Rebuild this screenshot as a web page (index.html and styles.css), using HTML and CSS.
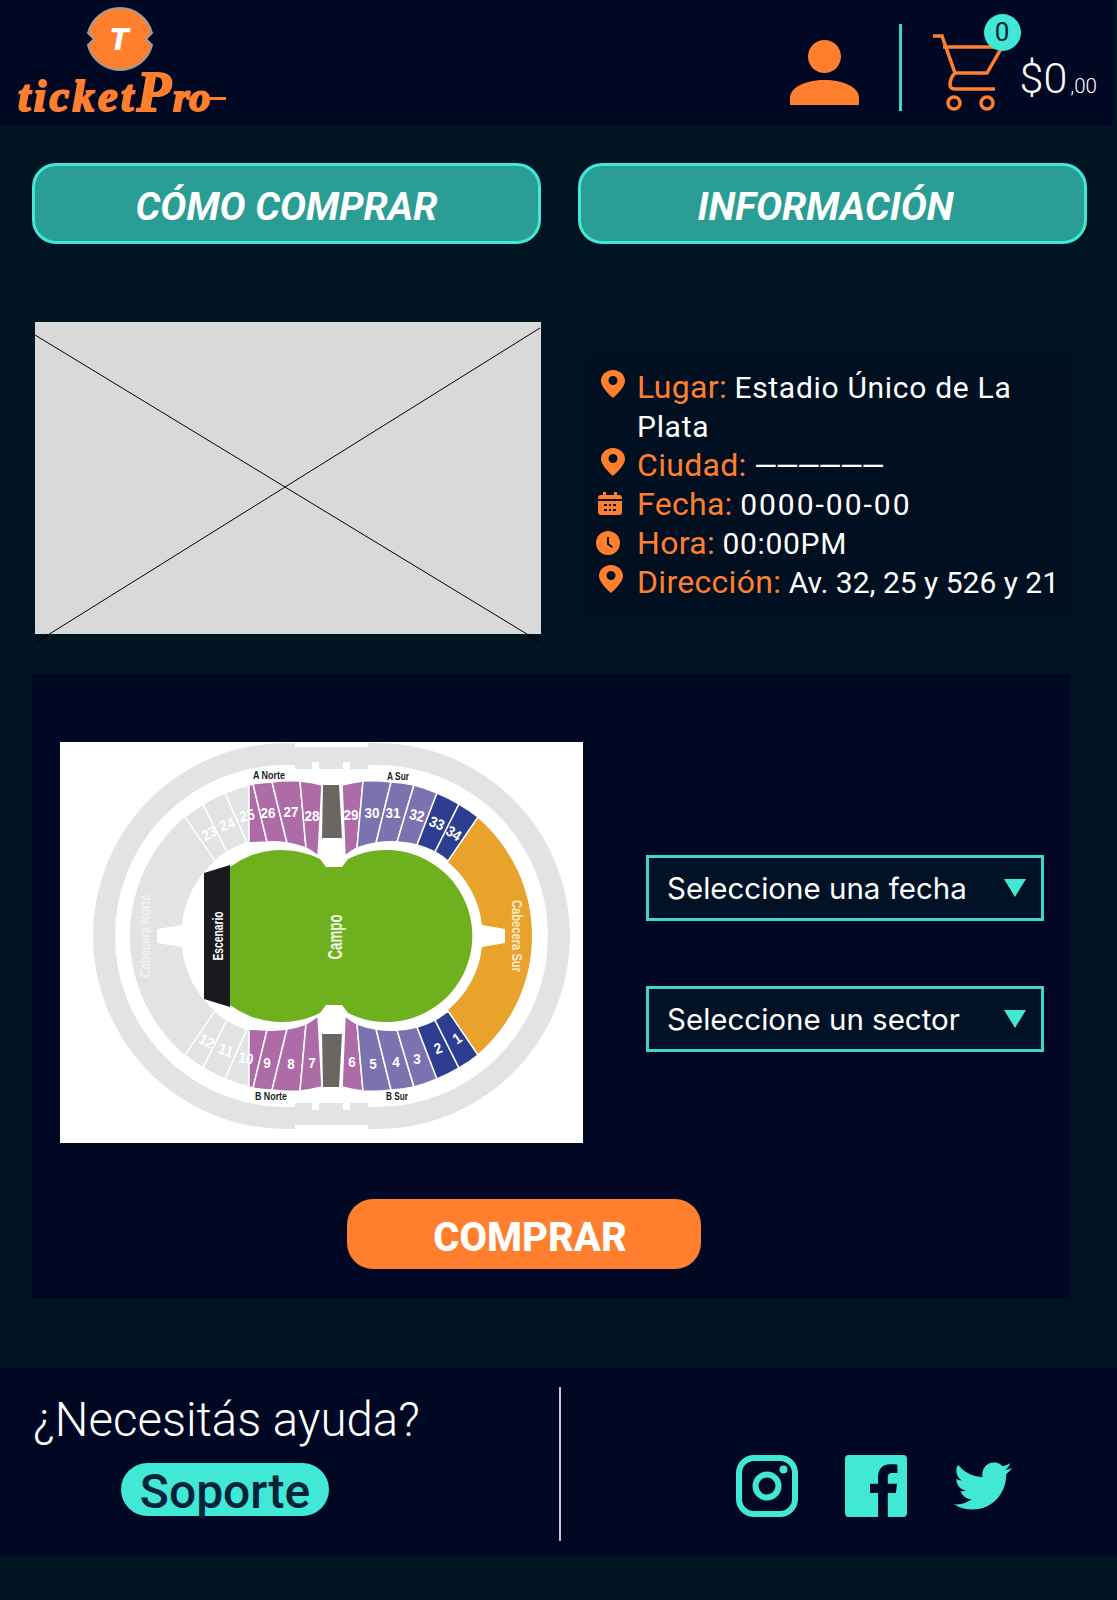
FILE: index.html
```html
<!DOCTYPE html>
<html lang="es">
<head>
    <meta charset="UTF-8">
    <meta name="viewport" content="width=device-width, initial-scale=1.0">
    <title>ticketPro</title>
    <link rel="stylesheet" href="styles.css">
</head>
<body>

    <header class="topbar">
        <div class="logo">
            <svg class="logo-badge" viewBox="85 5 70 72" width="70" height="72">
                <path class="logo-coin" d="M152 35A33 33 0 0 0 88 35L94 41L88 47A33 33 0 0 0 152 47L146 41Z"/>
                <text class="logo-t" x="119" y="52">T</text>
            </svg>
            <div class="logo-word">ticket<span class="logo-cap">P</span><span class="logo-end">ro</span></div>
        </div>

        <div class="topbar-right">
            <svg class="user-icon" viewBox="0 0 69 65" width="69" height="65">
                <circle cx="34.5" cy="16.5" r="16.5"/>
                <path d="M0 65V58C0 47 16 40 34.5 40S69 47 69 58V65Z"/>
            </svg>
            <div class="topbar-sep"></div>
            <div class="cart">
                <svg class="cart-icon" viewBox="930 30 76 85" width="76" height="85">
                    <path d="M933 36H942L955 73H987L1002 47H943"/>
                    <path d="M955 73C952 76 950 80 950 85C950 88 952 89 956 89H995"/>
                    <circle cx="954" cy="103" r="6"/>
                    <circle cx="987" cy="103" r="6"/>
                </svg>
                <span class="cart-count">0</span>
            </div>
            <div class="price">$0<small>,00</small></div>
        </div>
    </header>

    <nav class="main-buttons">
        <a class="big-button" href="#">CÓMO COMPRAR</a>
        <a class="big-button big-button-info" href="#">INFORMACIÓN</a>
    </nav>

    <section class="event">
        <div class="placeholder">
            <svg viewBox="35 322 506 312" width="506" height="312">
                <line x1="35" y1="335" x2="540" y2="642"/>
                <line x1="540" y1="328" x2="35" y2="643"/>
            </svg>
        </div>

        <ul class="event-info">
            <li>
                <svg viewBox="0 0 24 28"><path fill-rule="evenodd" d="M12 0C5 0 0 5 0 11C0 18 12 28 12 28S24 18 24 11C24 5 19 0 12 0ZM12 15A4.5 4.5 0 1 1 12 6A4.5 4.5 0 0 1 12 15Z"/></svg>
                <p><b>Lugar:</b> <span class="spread">Estadio Único de La</span> <span class="spread">Plata</span></p>
            </li>
            <li>
                <svg viewBox="0 0 24 28"><path fill-rule="evenodd" d="M12 0C5 0 0 5 0 11C0 18 12 28 12 28S24 18 24 11C24 5 19 0 12 0ZM12 15A4.5 4.5 0 1 1 12 6A4.5 4.5 0 0 1 12 15Z"/></svg>
                <p><b>Ciudad:</b> <span class="dashes">——————</span></p>
            </li>
            <li>
                <svg viewBox="0 0 24 24"><path fill-rule="evenodd" d="M5 1H8V4H16V1H19V4H21C23 4 24 5 24 7V8H0V7C0 5 1 4 3 4H5ZM0 10H24V21C24 23 23 24 21 24H3C1 24 0 23 0 21ZM6 13V15H9V13ZM11 13V15H13V13ZM15 13V15H18V13ZM6 18V20H9V18ZM11 18V20H13V18ZM15 18V20H18V18Z"/></svg>
                <p><b>Fecha:</b> <span class="spread-more">0000-00-00</span></p>
            </li>
            <li>
                <svg viewBox="0 0 24 24"><path fill-rule="evenodd" d="M12 0A12 12 0 1 1 12 24A12 12 0 1 1 12 0ZM11 6V13.5L16 17L17 15.500L13 12.500V6Z"/></svg>
                <p><b>Hora:</b> <span class="spread">00:00PM</span></p>
            </li>
            <li>
                <svg viewBox="0 0 24 28"><path fill-rule="evenodd" d="M12 0C5 0 0 5 0 11C0 18 12 28 12 28S24 18 24 11C24 5 19 0 12 0ZM12 15A4.5 4.5 0 1 1 12 6A4.5 4.5 0 0 1 12 15Z"/></svg>
                <p><b>Dirección:</b> Av. 32, 25 y 526 y 21</p>
            </li>
        </ul>
    </section>

    <section class="buy">
        <div class="buy-row">
            <!-- stadium map, drawn in page coordinates -->
            <svg class="map" viewBox="60 742 523 401" width="523" height="401">
                <rect class="m-ring" x="104" y="754" width="455" height="364" rx="182"/>
                <rect class="m-gray" x="295" y="747" width="73" height="22"/>
                <rect class="m-gray" x="295" y="1103" width="73" height="22"/>
                <rect class="m-white" x="295" y="742" width="73" height="5"/>
                <rect class="m-white" x="295" y="1125" width="73" height="5"/>
                <rect class="m-white" x="312" y="762" width="7" height="8"/>
                <rect class="m-white" x="343" y="762" width="7" height="8"/>
                <rect class="m-white" x="312" y="1102" width="7" height="8"/>
                <rect class="m-white" x="343" y="1102" width="7" height="8"/>

                <path class="m-gray" d="M185 817A156 156 0 0 0 185 1055L215 1011A96 96 0 0 1 182 947L157 943V929L182 925A96 96 0 0 1 215 861Z"/>
                <path class="m-orange" d="M478 818A156 156 0 0 1 478 1054L448 1010A96 96 0 0 0 482 947L505 943V929L482 925A96 96 0 0 0 448 862Z"/>

                <g id="north">
                    <path class="m-sec m-gray" d="M185 817A156 156 0 0 1 203 804L227 852A96 96 0 0 0 215 861Z"/>
                    <path class="m-sec m-gray" d="M203 804A156 156 0 0 1 225 793L247 843A96 96 0 0 0 227 852Z"/>
                    <path class="m-sec m-gray" d="M225 793A156 156 0 0 1 249 785V843H247Z"/>
                    <path class="m-sec m-purple" d="M249 785L253 784L267 842L249 843Z"/>
                    <path class="m-sec m-purple" d="M253 784A156 156 0 0 1 272 782L287 843A96 96 0 0 0 267 842Z"/>
                    <path class="m-sec m-purple" d="M272 782A156 156 0 0 1 300 781L306 848A96 96 0 0 0 287 843Z"/>
                    <path class="m-sec m-purple" d="M300 781A156 156 0 0 1 322 785L318 856A96 96 0 0 0 306 848Z"/>
                    <path class="m-sec m-purple" d="M342 785A156 156 0 0 1 363 781L357 848A96 96 0 0 0 345 856Z"/>
                    <path class="m-sec m-violet" d="M363 781A156 156 0 0 1 391 782L376 843A96 96 0 0 0 357 848Z"/>
                    <path class="m-sec m-violet" d="M391 782A156 156 0 0 1 414 785L397 842A96 96 0 0 0 376 843Z"/>
                    <path class="m-sec m-violet" d="M414 785A156 156 0 0 1 437 793L417 845A96 96 0 0 0 397 842Z"/>
                    <path class="m-sec m-navy" d="M437 793A156 156 0 0 1 459 804L435 852A96 96 0 0 0 417 845Z"/>
                    <path class="m-sec m-navy" d="M459 804A156 156 0 0 1 478 817L448 861A96 96 0 0 0 435 852Z"/>
                    <path class="m-aisle" d="M323 785H339L342 838H322Z"/>
                </g>
                <use href="#north" transform="matrix(1 0 0 -1 0 1872)"/>

                <path class="m-black" d="M204 873L230 865V1007L204 999Z"/>
                <path class="m-green" d="M230 867A86 86 0 0 1 320 859L326 867H342L348 859A86 86 0 1 1 348 1013L342 1005H326L320 1013A86 86 0 0 1 230 1005Z"/>

                <g class="m-num">
                    <text x="209" y="833" textLength="15" lengthAdjust="spacingAndGlyphs" transform="rotate(-28 209 833)">23</text>
                    <text x="227" y="824" textLength="15" lengthAdjust="spacingAndGlyphs" transform="rotate(-20 227 824)">24</text>
                    <text x="247" y="815" textLength="15" lengthAdjust="spacingAndGlyphs" transform="rotate(-12 247 815)">25</text>
                    <text x="268" y="812" textLength="15" lengthAdjust="spacingAndGlyphs">26</text>
                    <text x="291" y="811" textLength="15" lengthAdjust="spacingAndGlyphs">27</text>
                    <text x="312" y="815" textLength="15" lengthAdjust="spacingAndGlyphs">28</text>
                    <text x="351" y="814" textLength="15" lengthAdjust="spacingAndGlyphs">29</text>
                    <text x="372" y="812" textLength="15" lengthAdjust="spacingAndGlyphs">30</text>
                    <text x="393" y="812" textLength="15" lengthAdjust="spacingAndGlyphs">31</text>
                    <text x="417" y="815" textLength="15" lengthAdjust="spacingAndGlyphs" transform="rotate(12 417 815)">32</text>
                    <text x="437" y="823" textLength="15" lengthAdjust="spacingAndGlyphs" transform="rotate(22 437 823)">33</text>
                    <text x="454" y="833" textLength="15" lengthAdjust="spacingAndGlyphs" transform="rotate(32 454 833)">34</text>
                    <text x="207" y="1041" textLength="15" lengthAdjust="spacingAndGlyphs" transform="rotate(28 207 1041)">12</text>
                    <text x="226" y="1050" textLength="15" lengthAdjust="spacingAndGlyphs" transform="rotate(20 226 1050)">11</text>
                    <text x="246" y="1058" textLength="15" lengthAdjust="spacingAndGlyphs" transform="rotate(10 246 1058)">10</text>
                    <text x="267" y="1062" textLength="7.500" lengthAdjust="spacingAndGlyphs">9</text>
                    <text x="291" y="1063" textLength="7.500" lengthAdjust="spacingAndGlyphs">8</text>
                    <text x="312" y="1062" textLength="7.500" lengthAdjust="spacingAndGlyphs">7</text>
                    <text x="352" y="1061" textLength="7.500" lengthAdjust="spacingAndGlyphs">6</text>
                    <text x="373" y="1063" textLength="7.500" lengthAdjust="spacingAndGlyphs">5</text>
                    <text x="396" y="1061" textLength="7.500" lengthAdjust="spacingAndGlyphs">4</text>
                    <text x="417" y="1058" textLength="7.500" lengthAdjust="spacingAndGlyphs">3</text>
                    <text x="438" y="1048" textLength="7.500" lengthAdjust="spacingAndGlyphs" transform="rotate(-20 438 1048)">2</text>
                    <text x="457" y="1038" textLength="7.500" lengthAdjust="spacingAndGlyphs" transform="rotate(-35 457 1038)">1</text>
                </g>
                <g class="m-label">
                    <text x="269" y="775" textLength="32" lengthAdjust="spacingAndGlyphs">A Norte</text>
                    <text x="398" y="776" textLength="22" lengthAdjust="spacingAndGlyphs">A Sur</text>
                    <text x="271" y="1096" textLength="32" lengthAdjust="spacingAndGlyphs">B Norte</text>
                    <text x="397" y="1096" textLength="22" lengthAdjust="spacingAndGlyphs">B Sur</text>
                </g>
                <g class="m-zone">
                    <text class="pale" x="145" y="936" textLength="83" lengthAdjust="spacingAndGlyphs" transform="rotate(-90 145 936)">Cabecera Norte</text>
                    <text x="218" y="936" textLength="49" lengthAdjust="spacingAndGlyphs" transform="rotate(-90 218 936)">Escenario</text>
                    <text class="big" x="335" y="937" textLength="45" lengthAdjust="spacingAndGlyphs" transform="rotate(-90 335 937)">Campo</text>
                    <text class="cream" x="517" y="936" textLength="72" lengthAdjust="spacingAndGlyphs" transform="rotate(90 517 936)">Cabecera Sur</text>
                </g>
            </svg>

            <div class="selects">
                <div class="select-box">Seleccione una fecha<i class="select-arrow"></i></div>
                <div class="select-box">Seleccione un sector<i class="select-arrow"></i></div>
            </div>
        </div>
        <button class="buy-button">COMPRAR</button>
    </section>

    <footer class="footer">
        <div class="help">
            <p class="help-title">¿Necesitás ayuda?</p>
            <a class="help-pill" href="#">Soporte</a>
        </div>
        <div class="footer-sep"></div>
        <div class="social">
            <svg viewBox="0 0 62 62" width="62" height="62">
                <rect class="ig-line" x="3" y="3" width="56" height="56" rx="15"/>
                <circle class="ig-line" cx="31" cy="31" r="11.500"/>
                <circle class="ig-dot" cx="47.500" cy="14.500" r="4"/>
            </svg>
            <svg viewBox="0 0 24 24" width="62" height="62">
                <path class="ig-dot" d="M22.676 0H1.324C.593 0 0 .593 0 1.324v21.352C0 23.408.593 24 1.324 24h11.494v-9.294H9.689v-3.621h3.129V8.41c0-3.099 1.894-4.785 4.659-4.785 1.325 0 2.464.097 2.796.141v3.24h-1.921c-1.5 0-1.792.721-1.792 1.771v2.311h3.584l-.465 3.63H16.56V24h6.115c.733 0 1.325-.592 1.325-1.324V1.324C24 .593 23.408 0 22.676 0"/>
            </svg>
            <svg class="bird" viewBox="0 0 24 24" width="58" height="58">
                <path class="ig-dot" d="M23.953 4.57a10 10 0 01-2.825.775 4.958 4.958 0 002.163-2.723c-.951.555-2.005.959-3.127 1.184a4.92 4.92 0 00-8.384 4.482C7.69 8.095 4.067 6.13 1.64 3.162a4.822 4.822 0 00-.666 2.475c0 1.71.87 3.213 2.188 4.096a4.904 4.904 0 01-2.228-.616v.06a4.923 4.923 0 003.946 4.827 4.996 4.996 0 01-2.212.085 4.936 4.936 0 004.604 3.417 9.867 9.867 0 01-6.102 2.105c-.39 0-.779-.023-1.17-.067a13.995 13.995 0 007.557 2.209c9.053 0 13.998-7.496 13.998-13.985 0-.21 0-.42-.015-.63A9.935 9.935 0 0024 4.59z"/>
            </svg>
        </div>
    </footer>

</body>
</html>
```

FILE: styles.css
```css
body {
    font-family: Roboto, Arial, sans-serif;
    margin: 0;
    padding: 0;
    background-color: #011422;
    color: white;
    height: 1600px;
    overflow: hidden;
}

/* header */
.topbar {
    width: 1113px;
    height: 125px;
    background-color: #000824;
    display: flex;
    justify-content: space-between;
}
.logo {
    position: relative;
    width: 240px;
    padding-left: 18px;
}
.logo-badge {
    display: block;
    margin: 3px 0 0 67px;
}
.logo-coin {
    fill: #ff7f2e;
    stroke: #9b9b9b;
    stroke-width: 2;
}
.logo-t {
    fill: white;
    font-family: Roboto, sans-serif;
    font-weight: 900;
    font-style: italic;
    font-size: 32px;
    text-anchor: middle;
}
.logo-word {
    font-family: "Liberation Serif", serif;
    font-weight: bold;
    font-style: italic;
    font-size: 44px;
    letter-spacing: 3.5px;
    line-height: 50px;
    margin-top: -3px;
    color: #ff7f2e;
    -webkit-text-stroke: 2px #ff7f2e;
    white-space: nowrap;
}
.logo-cap {
    font-size: 56px;
    letter-spacing: 2px;
    line-height: 40px;
}
.logo-end {
    font-size: 42px;
    letter-spacing: 0;
}
.logo-word::after {
    content: "";
    position: absolute;
    left: 203px;
    top: 97px;
    width: 23px;
    height: 3px;
    background-color: #ff7f2e;
}
.topbar-right {
    display: flex;
    align-items: flex-start;
}
.user-icon {
    fill: #ff7f2e;
    margin: 40px 40px 0 0;
}
.topbar-sep {
    width: 3px;
    height: 87px;
    margin: 24px 28px 0 0;
    background-color: #3fd6c8;
}
.cart {
    position: relative;
    width: 76px;
    height: 85px;
    margin-top: 30px;
}
.cart-icon {
    display: block;
    fill: none;
    stroke: #ff7f2e;
    stroke-width: 3.5;
}
.cart-count {
    position: absolute;
    left: 54px;
    top: -16px;
    width: 37px;
    height: 37px;
    border-radius: 50%;
    background-color: #40e8d5;
    color: #00223a;
    font-size: 26px;
    line-height: 37px;
    text-align: center;
}
.price {
    font-weight: 300;
    font-size: 43px;
    line-height: 54px;
    margin: 51px 16px 0 14px;
    white-space: nowrap;
}
.price small {
    font-size: 20.5px;
    margin-left: 3px;
}

/* main buttons */
.main-buttons {
    display: flex;
    gap: 37px;
    padding: 38px 0 0 32px;
}
.big-button {
    width: 503px;
    height: 75px;
    border: 3px solid #40e8d5;
    border-radius: 24px;
    background-color: #2a9d94;
    color: white;
    font-size: 39px;
    font-weight: 700;
    font-style: italic;
    line-height: 82px;
    text-align: center;
    text-decoration: none;
}
.big-button-info {
    text-indent: -14px;
}

/* event row */
.event {
    display: flex;
    align-items: flex-start;
    height: 312px;
    margin-top: 78px;
    padding-left: 35px;
}
.placeholder {
    width: 506px;
    height: 312px;
    background-color: #d9d9d9;
    flex-shrink: 0;
}
.placeholder svg {
    display: block;
    overflow: visible;
    stroke: black;
    stroke-width: 1;
}
.event-info {
    list-style: none;
    width: 468px;
    margin: 36px 0 0 49px;
    padding: 10px 7px 14px;
    background-color: #011020;
    box-shadow: 0 0 8px #011020;
    border-radius: 6px;
    font-size: 30px;
    line-height: 39px;
}
.event-info li {
    display: flex;
    align-items: flex-start;
}
.event-info svg {
    width: 24px;
    height: 28px;
    flex-shrink: 0;
    margin: 2px 12px 0 4px;
    fill: #ff7f2e;
}
.event-info li:nth-child(3) svg {
    transform: translate(-3px, 2px);
}
.event-info li:nth-child(4) svg {
    transform: translate(-5px, 3px);
}
.event-info li:nth-child(5) svg {
    transform: translateX(-2px);
}
.event-info p {
    margin: 0;
}
.event-info b {
    color: #ff7f2e;
    font-weight: 400;
    font-size: 32px;
    letter-spacing: 0.3px;
}
.spread {
    letter-spacing: 0.7px;
}
.spread-more {
    letter-spacing: 2px;
}
.dashes {
    letter-spacing: -2px;
}

/* buy panel */
.buy {
    width: 1039px;
    height: 625px;
    box-sizing: border-box;
    margin: 40px 0 0 32px;
    padding: 68px 0 0 28px;
    background-color: #000824;
}
.buy-row {
    display: flex;
    align-items: flex-start;
    gap: 63px;
}
.map {
    display: block;
    background-color: white;
    flex-shrink: 0;
}
.m-ring {
    fill: none;
    stroke: #e1e3e5;
    stroke-width: 22;
}
.m-gray { fill: #e1e3e5; }
.m-white { fill: white; }
.m-orange { fill: #e9a22b; }
.m-purple { fill: #ad6ba8; }
.m-violet { fill: #7b72b0; }
.m-navy { fill: #2d3e92; }
.m-aisle { fill: #6a6763; }
.m-black { fill: #1a1a1e; }
.m-green { fill: #6fb01f; }
.m-sec {
    stroke: white;
    stroke-width: 1.5;
}
.map text {
    font-family: "Liberation Sans", sans-serif;
    font-weight: bold;
    text-anchor: middle;
    dominant-baseline: central;
}
.m-num text {
    fill: white;
    font-size: 15px;
}
.m-label text {
    fill: #1a1a1e;
    font-size: 11px;
}
.m-zone text {
    fill: white;
    font-size: 14px;
}
.m-zone .pale {
    fill: #f1f2f3;
}
.m-zone .cream {
    fill: #fbeccb;
}
.m-zone .big {
    fill: #f4f8e6;
    font-size: 20px;
}
.selects {
    display: flex;
    flex-direction: column;
    gap: 65px;
    margin-top: 113px;
}
.select-box {
    position: relative;
    width: 392px;
    height: 60px;
    border: 3px solid #3fd6c8;
    background-color: #011226;
    font-family: Inter, sans-serif;
    font-size: 29.5px;
    line-height: 60px;
    text-indent: 18px;
}
.select-arrow {
    position: absolute;
    right: 15px;
    top: 21px;
    width: 0;
    height: 0;
    border-left: 11px solid transparent;
    border-right: 11px solid transparent;
    border-top: 18px solid #40e8d5;
}
.buy-button {
    display: block;
    width: 354px;
    height: 70px;
    margin: 56px 0 0 287px;
    padding: 6px 0 0 12px;
    border: none;
    border-radius: 26px;
    background-color: #ff7f2e;
    color: white;
    font-family: Roboto, sans-serif;
    font-size: 40px;
    font-weight: 800;
}

/* footer */
.footer {
    height: 188px;
    margin-top: 69px;
    background-color: #000824;
    display: flex;
}
.help {
    width: 559px;
    padding-left: 33px;
    box-sizing: border-box;
}
.help-title {
    margin: 22px 0 0 0;
    font-size: 47.4px;
    font-weight: 300;
    line-height: 60px;
}
.help-pill {
    display: block;
    width: 208px;
    height: 53px;
    margin: 13px 0 0 88px;
    border-radius: 27px;
    background-color: #40e8d5;
    color: #00223a;
    font-size: 48px;
    font-weight: 500;
    line-height: 57px;
    text-align: center;
    text-decoration: none;
}
.footer-sep {
    width: 2px;
    height: 154px;
    margin-top: 19px;
    background-color: #c9ccd6;
}
.social {
    display: flex;
    align-items: flex-start;
    gap: 47px;
    padding: 87px 0 0 175px;
}
.bird {
    margin-top: 2px;
}
.ig-line {
    fill: none;
    stroke: #40e8d5;
    stroke-width: 6;
}
.ig-dot {
    fill: #40e8d5;
}
```
